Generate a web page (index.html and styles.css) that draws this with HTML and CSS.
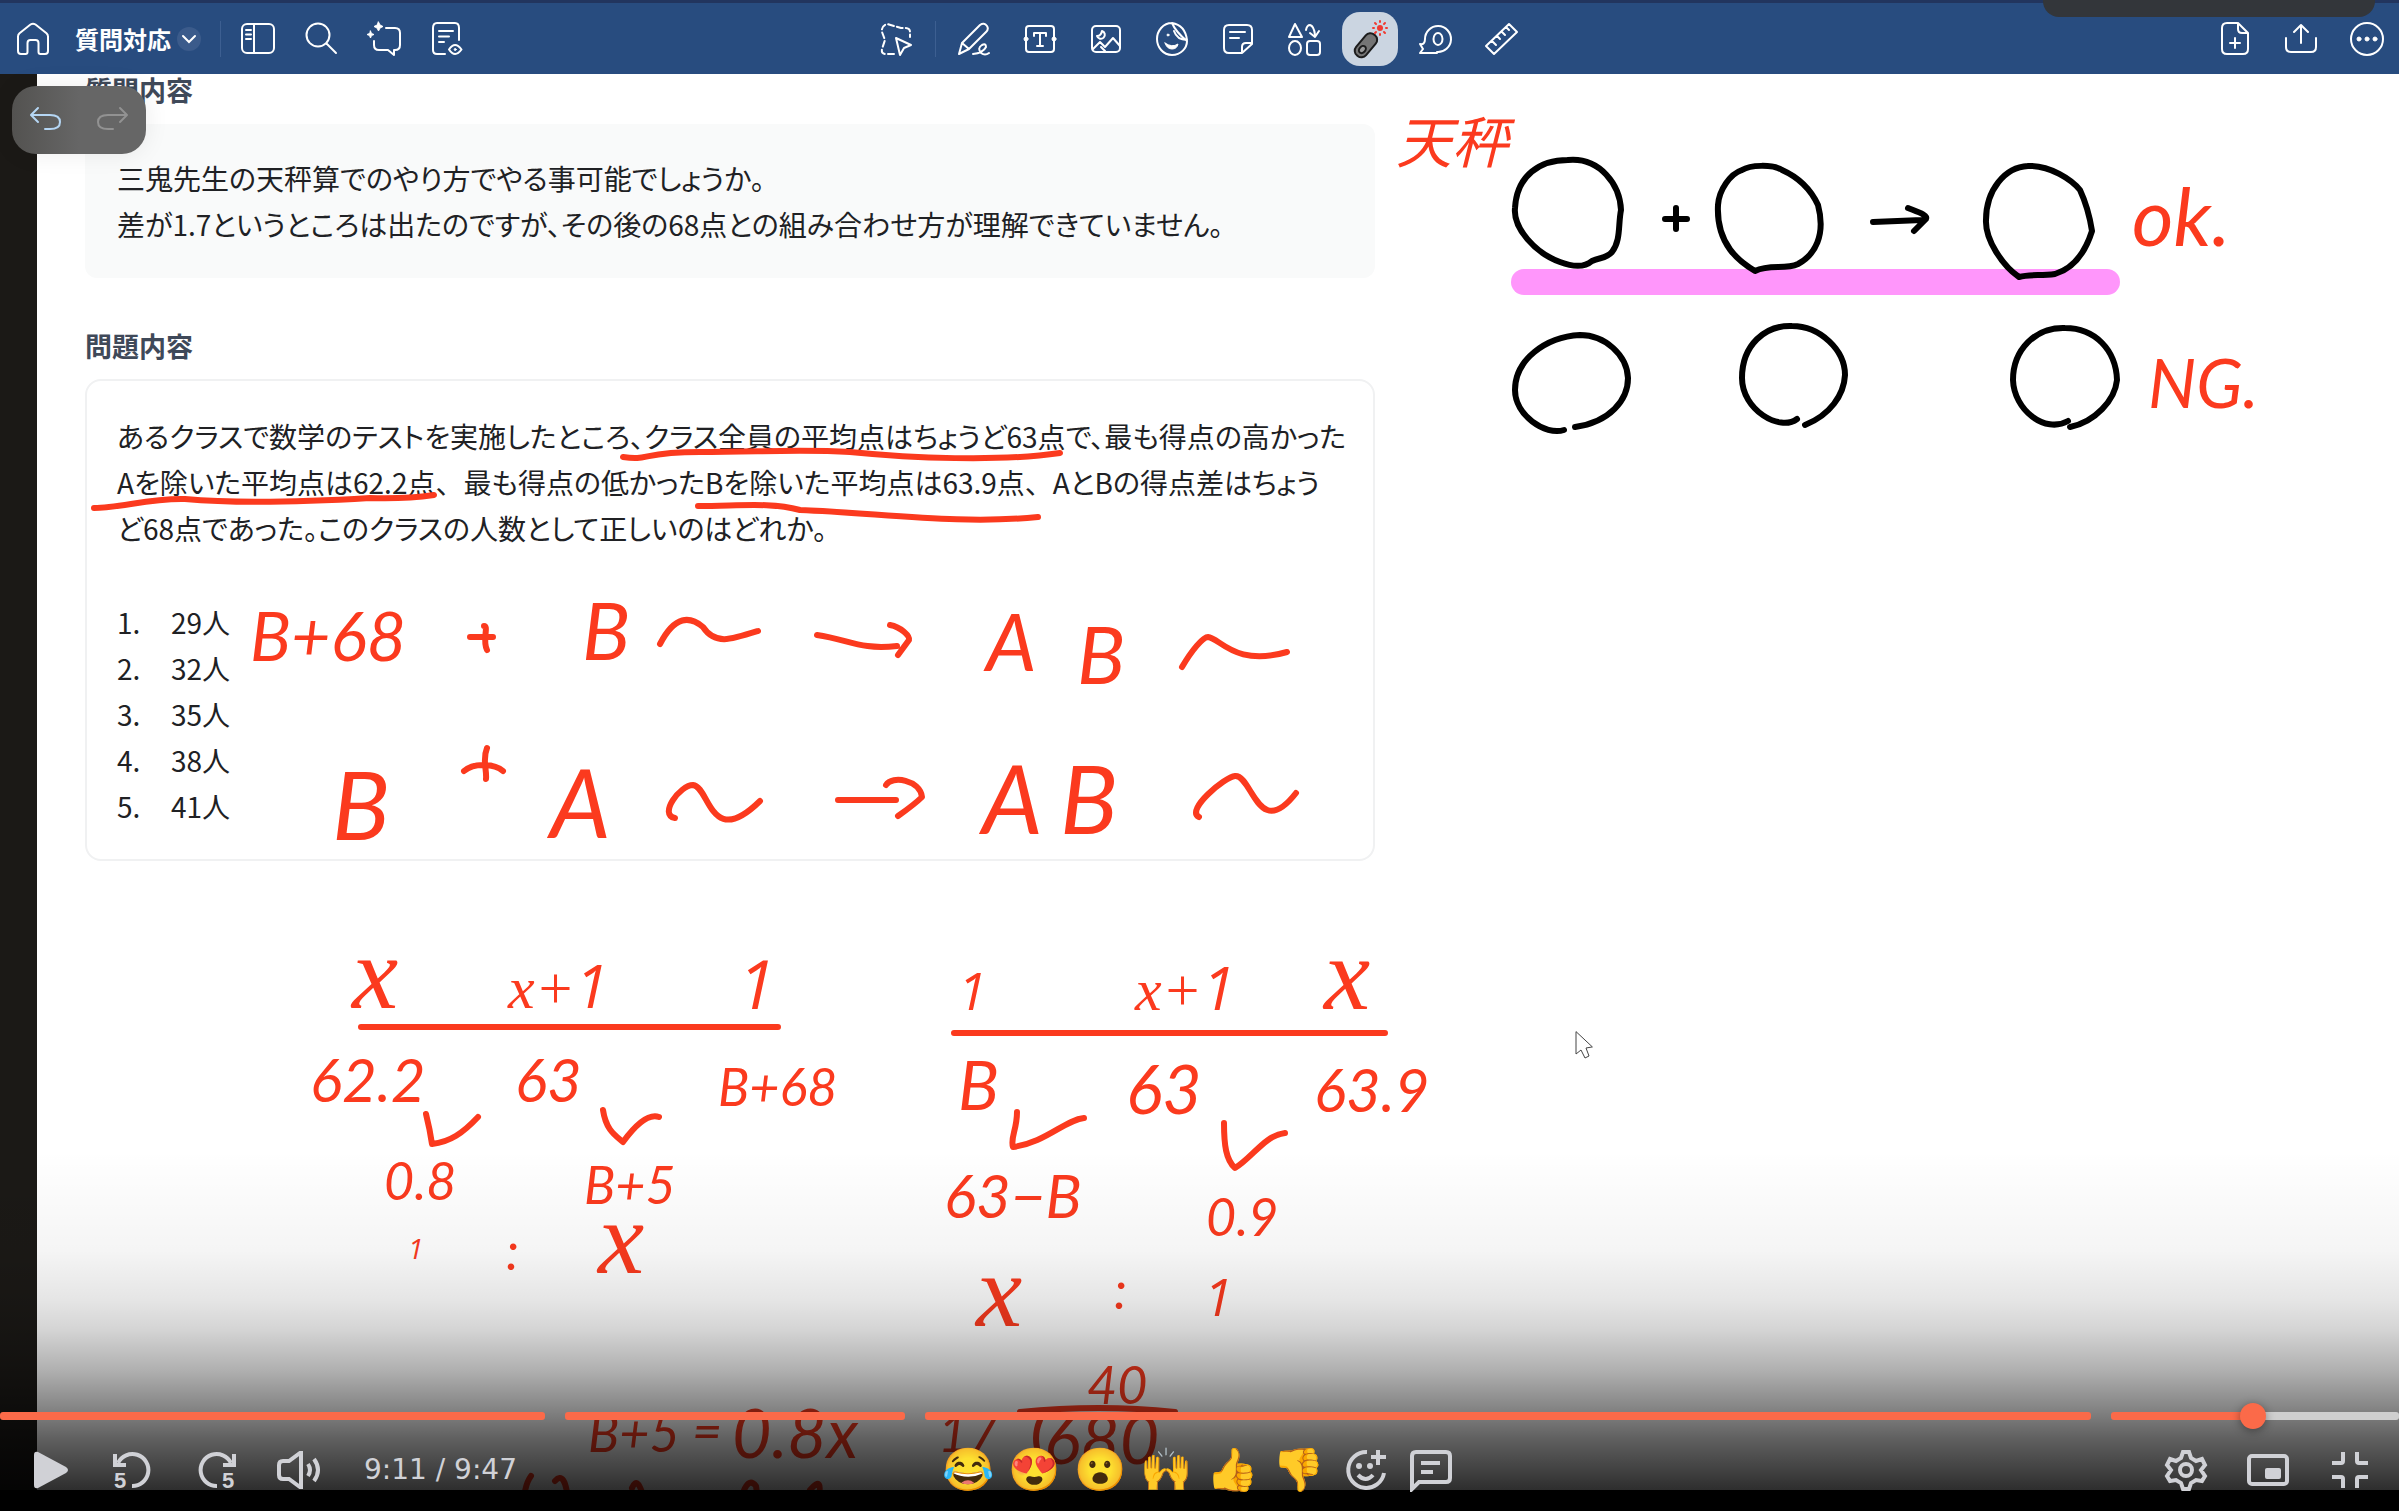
FILE: index.html
```html
<!DOCTYPE html>
<html lang="ja">
<head>
<meta charset="utf-8">
<meta name="viewport" content="width=device-width, initial-scale=1">
<title>質問対応</title>
<link rel="stylesheet" href="styles.css">
</head>
<body>
<div class="player">
  <div class="frame">
    <header class="toolbar">
      <div class="tools tools-left">
        <button class="tool" aria-label="ホーム"><svg class="icon" viewBox="0 0 36 36"><path d="M3 15.500Q3 13.500 4.500 12.200L15.500 3.500Q18 1.800 20.500 3.500L31.500 12.200Q33 13.500 33 15.500V30Q33 33 30 33H25.500Q23.500 33 23.500 31V22Q23.500 19 20.500 19H15.500Q12.500 19 12.500 22V31Q12.500 33 10.500 33H6Q3 33 3 30Z"/></svg></button>
        <button class="title">質問対応<span class="chevron"><svg class="icon-small" viewBox="0 0 24 24"><path d="M6 9l6 6 6-6"/></svg></span></button>
        <span class="divider"></span>
        <button class="tool" aria-label="サイドバー"><svg class="icon" viewBox="0 0 36 36"><rect x="2" y="3" width="32" height="29" rx="5"/><path d="M14 3v29M6 9h5M6 13.500h5M6 18h5"/></svg></button>
        <button class="tool" aria-label="検索"><svg class="icon" viewBox="0 0 36 36"><circle cx="15" cy="14" r="11.500"/><path d="M23.500 22.500L33 32"/></svg></button>
        <button class="tool" aria-label="AI アシスタント"><svg class="icon" viewBox="0 0 36 36"><path d="M20 7h9q5 0 5 5v12q0 5-5 5h-1v5l-6-5h-9q-5 0-5-5v-4"/><path class="solid" d="M12.500 1l1.500 3 3 1.500-3 1.500-1.500 3-1.500-3-3-1.500 3-1.500zM4.500 10l1 2.500L8 13.500l-2.500 1-1 2.500-1-2.500-2.500-1 2.500-1z"/></svg></button>
        <button class="tool" aria-label="ページ表示"><svg class="icon" viewBox="0 0 36 36"><path d="M30 19V7q0-5-4-5H8Q4 2 4 7v22q0 4 4 4h8M10 10h14M10 15.500h10M10 21h5"/><path d="M20 28.500q6-9 12.500 0q-6.500 9-12.500 0z"/><circle class="solid" cx="26.200" cy="28.500" r="1"/></svg></button>
      </div>
      <div class="tools tools-centre">
        <button class="tool" aria-label="選択"><svg class="icon" viewBox="0 0 36 36"><path stroke-dasharray="6 3" d="M15 33H7q-5 0-4-5l3-9-3-8Q2 5 8 3l14 4h4q5 0 5 4v5"/><path d="M17 17l15 7-7 3-4 7z"/></svg></button>
        <span class="divider divider-centre"></span>
        <button class="tool" aria-label="ペン"><svg class="icon" viewBox="0 0 36 36"><path d="M3 33l3-11L24 4q4-3 7 1 2 3-1 6L13 28zM6 22l7 6M17 33q10-1 13-7 0-4-4-2-5 3-1 8 4 3 8 0"/></svg></button>
        <button class="tool" aria-label="テキスト"><svg class="icon" viewBox="0 0 36 36"><rect x="4" y="5" width="28" height="26" rx="3"/><path d="M12 15v-3h12v3M18 12v13M15 25h6"/><circle class="solid" cx="4" cy="18" r="2"/><circle class="solid" cx="32" cy="18" r="2"/></svg></button>
        <button class="tool" aria-label="画像"><svg class="icon" viewBox="0 0 36 36"><rect x="4" y="5" width="28" height="26" rx="4"/><path d="M5 28l7-7 5 5 8-9 7 8M17 30l-4-4M14 10a4 4 0 1 1-5 5q4 0 5-5"/></svg></button>
        <button class="tool" aria-label="ステッカー"><svg class="icon" viewBox="0 0 36 36"><path d="M18 2C9 2 3 10 3 18s6 16 15 16 15-7 15-14C28 16 21 9 18 2q13 2 15 17-10 0-13-9"/><path class="solid" d="M11 22q7 5 13 1-1 5-6 5-5 0-7-6z"/><circle class="solid" cx="14" cy="14" r="1"/></svg></button>
        <button class="tool" aria-label="付箋"><svg class="icon" viewBox="0 0 36 36"><path d="M22 32H9q-5 0-5-5V9q0-5 5-5h18q5 0 5 5v14zM22 32v-6q0-4 4-4h6M10 11h15M10 17h9"/></svg></button>
        <button class="tool" aria-label="図形"><svg class="icon" viewBox="0 0 36 36"><path d="M9 3l7 13H3zM20 9q1-5 4-5 4 1 5 10M24 12l5 4 4-6"/><ellipse cx="9" cy="27" rx="6" ry="7"/><rect x="21" y="20" width="13" height="14" rx="3"/></svg></button>
        <button class="tool tool-active" aria-label="レーザーポインター" aria-pressed="true"><svg class="icon icon-large" viewBox="0 0 48 48"><g transform="rotate(40 20 31)"><rect x="13" y="17" width="13" height="27" rx="6" fill="#757575" stroke="#1c1c1c" stroke-width="2"/><ellipse cx="19.500" cy="36" rx="3" ry="4" fill="#999" stroke="#1c1c1c" stroke-width="2"/></g><circle cx="34" cy="13" r="3" fill="#f03a30" stroke="none"/><path stroke="#f03a30" d="M34 6v1M34 19v1M27 13h1M40 13h1M29 8l1 1M38 17l1 1M29 18l1-1M38 9l1-1"/></svg></button>
        <button class="tool" aria-label="テープ"><svg class="icon" viewBox="0 0 36 36"><path d="M19 31A13 13 0 1 0 7 18q0 6-5 5l3 5-3 4h17"/><ellipse cx="20" cy="18" rx="4.500" ry="6"/></svg></button>
        <button class="tool" aria-label="定規"><svg class="icon" viewBox="0 0 36 36"><path d="M2 25L25 3l8 8-23 22zM8 20l4 4M13 15l3 3M18 11l3 3M22 6l3 3"/></svg></button>
      </div>
      <div class="tools tools-right">
        <button class="tool" aria-label="ページを追加"><svg class="icon" viewBox="0 0 36 36"><path d="M20 2H10Q5 2 5 7v21q0 5 5 5h16q5 0 5-5V12L21 2v6q0 4 4 4h6M18 17v10M13 22h10"/></svg></button>
        <button class="tool" aria-label="共有"><svg class="icon" viewBox="0 0 36 36"><path d="M3 17v9q0 5 5 5h20q5 0 5-5v-9M18 22V4M11 11l7-7 7 7"/></svg></button>
        <button class="tool" aria-label="その他"><svg class="icon" viewBox="0 0 36 36"><circle cx="18" cy="18" r="16"/><g class="solid"><circle cx="10" cy="18" r="2"/><circle cx="18" cy="18" r="2"/><circle cx="26" cy="18" r="2"/></g></svg></button>
      </div>
      <span class="notch"></span>
    </header>

    <main class="board">
      <article class="document">
        <h2 class="label">質問内容</h2>
        <p class="question">三鬼先生の天秤算でのやり方でやる事可能でしょうか。<br>差が1.7というところは出たのですが、その後の68点との組み合わせ方が理解できていません。</p>
        <h2 class="label">問題内容</h2>
        <section class="problem">
          <p>あるクラスで数学のテストを実施したところ、クラス全員の平均点はちょうど63点で、最も得点の高かった<br>Aを除いた平均点は62.2点<span class="full">、</span>最も得点の低かったBを除いた平均点は63.9点<span class="full">、</span>AとBの得点差はちょう<br>ど68点であった。このクラスの人数として正しいのはどれか。</p>
          <ol class="choices"><li>29人</li><li>32人</li><li>35人</li><li>38人</li><li>41人</li></ol>
        </section>
      </article>
    </main>

    <svg class="ink" role="group" aria-label="手書きメモ">
      <path class="marker" d="M1524 282H2107"/>
      <g class="pen-black">
        <path d="M1568 160C1600 157 1620 185 1621 210C1618 225 1621 240 1612 252C1606 259 1600 257 1592 261C1585 267 1573 267 1560 262C1535 253 1513 228 1515 208C1517 175 1540 160 1568 160"/>
        <path d="M1742 170C1750 165 1772 164 1782 170C1800 178 1812 192 1818 205C1826 235 1815 255 1798 264C1785 270 1770 264 1755 271C1740 262 1716 245 1718 205C1719 190 1730 174 1742 170"/>
        <path d="M2028 166C2050 165 2072 180 2080 190C2087 205 2090 218 2092 231C2086 250 2075 268 2055 274C2040 276 2030 274 2019 277C2003 266 1985 240 1986 220C1986 190 2005 167 2028 166"/>
        <path d="M1564 430C1545 436 1515 415 1515 390C1515 360 1545 337 1580 335C1605 335 1627 355 1628 378C1628 400 1610 422 1575 427"/>
        <path d="M1797 419C1780 432 1742 410 1742 378C1742 345 1765 325 1792 326C1820 326 1845 350 1845 375C1844 395 1830 415 1805 425"/>
        <path d="M2068 421C2045 434 2014 410 2013 380C2013 350 2035 327 2065 328C2095 328 2116 350 2117 380C2115 400 2095 422 2070 427"/>
        <path d="M1665 219H1687M1676 208V229"/>
        <path d="M1873 222L1922 220M1908 208C1918 212 1928 215 1926 219L1914 231"/>
      </g>
      <g class="pen-red">
        <path d="M623 457C650 461 640 452 700 452C760 452 800 449 850 452C910 458 1000 462 1060 453"/>
        <path d="M94 508C120 508 150 498 185 499C240 504 320 501 370 498C400 499 420 497 434 495"/>
        <path d="M698 506C740 506 770 502 800 510C880 513 960 525 1038 517"/>
        <path d="M470 637H493M484 626C489 626 482 640 487 650"/>
        <path d="M660 644C675 615 690 616 703 627C715 645 730 640 758 631"/>
        <path d="M817 635C850 640 860 650 897 646M890 625C901 627 910 636 909 640L898 655"/>
        <path d="M1182 667C1192 650 1203 637 1208 637C1220 638 1235 667 1287 652"/>
        <path d="M464 771C475 762 495 764 503 771M487 748C482 760 487 770 486 779"/>
        <path d="M675 818C658 815 680 785 693 785C710 787 710 850 760 801"/>
        <path d="M838 800H896M886 785C892 775 920 780 922 797Q915 804 898 816"/>
        <path d="M1199 817C1185 810 1225 777 1235 776C1252 774 1258 842 1296 793"/>
        <path d="M361 1027H778M954 1033H1385"/>
        <path d="M426 1114Q430 1130 432 1144C450 1142 463 1133 478 1117"/>
        <path d="M603 1110C606 1130 615 1135 623 1142Q645 1112 659 1117"/>
        <path d="M1017 1112C1017 1130 1010 1138 1013 1147C1045 1143 1065 1120 1084 1118"/>
        <path d="M1224 1123C1224 1145 1226 1160 1235 1168C1252 1158 1265 1135 1285 1133"/>
        <path d="M1020 1412Q1100 1404 1175 1412M1040 1420Q1032 1438 1040 1458"/>
        <path d="M531 1476Q525 1484 524 1500M555 1481Q565 1470 568 1500M632 1488Q638 1474 644 1500M742 1496Q748 1476 756 1486L758 1500M810 1490Q824 1474 818 1500"/>
      </g>
      <g class="writing">
        <text class="kanji" x="1396" y="163">天秤</text>
        <text class="big" x="2132" y="246">ok.</text>
        <text class="large" x="2148" y="408">NG.</text>
        <text class="large" x="250" y="661">B+68</text>
        <text class="big" x="582" y="660">B</text>
        <text class="big" x="986" y="671">A</text>
        <text class="big" x="1077" y="684">B</text>
        <text class="huge" x="332" y="840">B</text>
        <text class="huge" x="550" y="838">A</text>
        <text class="huge" x="982" y="834">A</text>
        <text class="huge" x="1060" y="834">B</text>
        <text class="letter-big" x="352" y="1008">x</text>
        <text class="letter" x="508" y="1008">x+<tspan class="one">1</tspan></text>
        <text class="large one" x="738" y="1009">1</text>
        <text class="mid" x="310" y="1102">62.2</text>
        <text class="mid" x="515" y="1102">63</text>
        <text class="small" x="718" y="1106">B+68</text>
        <text class="small" x="384" y="1200">0.8</text>
        <text class="small" x="584" y="1204">B+5</text>
        <text class="tiny one" x="408" y="1259">1</text>
        <text class="small" x="506" y="1270">:</text>
        <text class="letter-big" x="598" y="1273">x</text>
        <text class="small one" x="958" y="1010">1</text>
        <text class="letter" x="1135" y="1010">x+<tspan class="one">1</tspan></text>
        <text class="letter-big" x="1324" y="1009">x</text>
        <text class="large" x="958" y="1110">B</text>
        <text class="large" x="1126" y="1114">63</text>
        <text class="mid" x="1314" y="1112">63.9</text>
        <text class="mid" x="944" y="1218">63−B</text>
        <text class="small" x="1206" y="1236">0.9</text>
        <text class="letter-big" x="976" y="1326">x</text>
        <text class="small" x="1114" y="1309">:</text>
        <text class="small one" x="1204" y="1316">1</text>
        <text class="small" x="1087" y="1404">40</text>
        <text class="small" x="588" y="1452">B+5</text>
        <text class="small" x="692" y="1450">=</text>
        <text class="large" x="732" y="1458">0.8x</text>
        <text class="small" x="938" y="1452">17</text>
        <text class="large" x="1044" y="1464">680</text>
      </g>
      <path class="cursor" d="M1576 1032v22l5-4 4 8 4-2-3-8 6-1z"/>
    </svg>

    <div class="history">
      <button class="step" aria-label="元に戻す"><svg class="icon" viewBox="0 0 36 36"><path d="M10 6l-7 7 7 7M4 13h18q10 0 10 7t-10 7h-5"/></svg></button>
      <button class="step step-off" aria-label="やり直す" disabled><svg class="icon" viewBox="0 0 36 36"><path d="M26 6l7 7-7 7M32 13H14q-10 0-10 7t10 7h5"/></svg></button>
    </div>
  </div>

  <footer class="controls">
    <div class="timeline">
      <span class="chapter played"></span><span class="chapter played chapter-two"></span><span class="chapter played chapter-three"></span><span class="chapter current"></span>
      <input class="seek" type="range" min="0" max="1000" value="944" aria-label="再生位置">
    </div>
    <div class="row">
      <div class="group">
        <button class="control" aria-label="再生"><svg class="glyph" viewBox="0 0 44 44"><path class="fill" d="M6 7q0-4 4-3l28 15q4 3 0 6L10 40q-4 1-4-3z"/></svg></button>
        <button class="control" aria-label="5秒戻る"><svg class="glyph" viewBox="0 0 44 44"><path d="M21 38A16 16 0 1 0 7 15M4 6v11h11"/><text class="skip" x="3" y="40">5</text></svg></button>
        <button class="control" aria-label="5秒進む"><svg class="glyph" viewBox="0 0 44 44"><path d="M23 38A16 16 0 1 1 37 15M40 6v11H29"/><text class="skip" x="28" y="40">5</text></svg></button>
        <button class="control" aria-label="音量"><svg class="glyph" viewBox="0 0 44 44"><path d="M24 5v34h-1L12 31H6q-4 0-4-4V17q0-4 4-4h6L23 5zM31 16q4 6 0 12M37 11q8 11 0 22"/></svg></button>
        <time class="time">9:11 / 9:47</time>
      </div>
      <div class="reactions">
        <button class="emoji">😂</button><button class="emoji">😍</button><button class="emoji">😮</button><button class="emoji">🙌</button><button class="emoji">👍</button><button class="emoji">👎</button>
        <button class="emoji" aria-label="リアクションを追加"><svg class="glyph" viewBox="0 0 44 44"><path d="M24 4A18 18 0 1 0 41 25M35 2v15M28 9h15M15 27q8 8 15 0"/><circle class="fill" cx="16" cy="18" r="3"/><circle class="fill" cx="27" cy="18" r="3"/></svg></button>
        <button class="emoji" aria-label="コメント"><svg class="glyph" viewBox="0 0 44 44"><path d="M3 41V8q0-4 4-4h30q4 0 4 4v22q0 4-4 4H10zM12 15h19M12 24h12"/></svg></button>
      </div>
      <div class="group group-end">
        <button class="control" aria-label="設定"><svg class="glyph" viewBox="0 0 44 44"><path d="M19 4h6l2 6 5 3 6-2 3 6-4 5 4 6-3 5-6-1-5 3-2 6h-6l-2-6-5-3-6 1-3-5 4-6-4-5 3-6 6 2 5-3z"/><circle cx="22" cy="22" r="6"/></svg></button>
        <button class="control" aria-label="ピクチャーインピクチャー"><svg class="glyph" viewBox="0 0 44 44"><rect x="3" y="8" width="38" height="28" rx="3"/><rect class="fill" x="19" y="20" width="16" height="11" rx="2"/></svg></button>
        <button class="control" aria-label="全画面を終了"><svg class="glyph" viewBox="0 0 44 44"><path d="M4 15h9q2 0 2-2V4M40 15h-9q-2 0-2-2V4M4 29h9q2 0 2 2v9M40 29h-9q-2 0-2 2v9"/></svg></button>
      </div>
    </div>
  </footer>
</div>
</body>
</html>
```
FILE: styles.css
```css
* { box-sizing: border-box; }
body { margin: 0; background: #000; font-family: "Noto Sans CJK JP", sans-serif; color: #202124; }
button { border: 0; padding: 0; background: none; color: inherit; font: inherit; }
h2, p, ol { margin: 0; padding: 0; }

.player { position: relative; display: flex; flex-direction: column; min-height: 100vh; padding-bottom: 21px; overflow: hidden; }
.frame { position: relative; flex: 1; display: flex; flex-direction: column; overflow: hidden; background: #fff; }

/* app toolbar */
.toolbar { position: relative; z-index: 2; display: grid; grid-template-columns: 1fr auto 1fr; align-items: center; height: 74px; border-top: 3px solid #22355e; background: #284c7f; color: #fff; }
.tools { display: flex; align-items: center; gap: 30px; }
.tools-left { padding-left: 15px; gap: 27px; }
.tools-right { justify-content: flex-end; padding-right: 14px; }
.tool { display: flex; align-items: center; justify-content: center; width: 36px; height: 54px; }
.tool-active { width: 56px; margin: 0 -10px; border-radius: 18px; background: #cbd5e1; }
.icon { width: 36px; height: 36px; fill: none; stroke: currentColor; stroke-width: 2; stroke-linecap: round; stroke-linejoin: round; }
.icon-large { width: 48px; height: 48px; }
.icon-small { width: 24px; height: 24px; fill: none; stroke: currentColor; stroke-width: 2; stroke-linecap: round; }
.solid { fill: currentColor; stroke-width: 1; }
.title { display: flex; align-items: center; gap: 6px; margin-left: -3px; font-size: 24px; font-weight: 700; }
.chevron { display: flex; border-radius: 50%; background: #3b5b8b; }
.divider { width: 1px; height: 36px; margin: 0 -8px; background: #3d5f91; }
.divider-centre { margin: 0 -10px; }
.notch { position: absolute; top: -3px; right: 24px; width: 332px; height: 17px; border-radius: 0 0 16px 16px; background: #33363a; }

/* shared page */
.board { flex: 1; display: grid; grid-template-columns: minmax(0, 59fr) minmax(0, 41fr); border-left: 37px solid #1b1916; }
.document { padding: 0 56px 0 48px; white-space: nowrap; font-size: 28px; line-height: 46px; font-feature-settings: "palt"; }
.label { font-size: 27px; line-height: 32px; font-weight: 700; color: #3f4959; font-feature-settings: normal; }
.question { margin: 18px 0 52px; padding: 31px 32px; border-radius: 12px; background: #f9fafa; }
.problem { margin-top: 17px; padding: 32px 30px 30px; border: 2px solid #f0f1f2; border-radius: 16px; }
.full { font-feature-settings: normal; }
.choices { margin-top: 48px; list-style: none; counter-reset: choice; }
.choices li { display: flex; counter-increment: choice; }
.choices li::before { content: counter(choice) "."; width: 54px; }

/* handwriting over the page */
.ink { position: absolute; inset: 0; width: 100%; height: 100%; overflow: hidden; fill: none; stroke-linecap: round; stroke-linejoin: round; }
.marker { stroke: #ff96fb; stroke-width: 26; }
.pen-black { stroke: #000; stroke-width: 6; }
.pen-red { stroke: #fb3a1e; stroke-width: 6; }
.writing { fill: #fb3a1e; font-family: Lato, sans-serif; font-style: italic; font-weight: 400; }
.kanji { font-family: "Noto Sans CJK JP", sans-serif; font-size: 56px; }
.huge { font-size: 96px; }
.big { font-size: 80px; }
.large { font-size: 68px; }
.mid { font-size: 60px; }
.small { font-size: 52px; }
.tiny { font-size: 28px; }
.one { font-family: "Open Sans", sans-serif; }
.letter { font-family: "Liberation Serif", serif; font-size: 60px; }
.letter-big { font-family: "Liberation Serif", serif; font-size: 104px; }
.cursor { fill: #fff; stroke: #444; stroke-width: 1; }

/* undo and redo */
.history { position: absolute; z-index: 3; left: 12px; top: 86px; display: flex; align-items: center; gap: 30px; height: 68px; padding: 0 16px; border-radius: 24px; background: linear-gradient(90deg, #535250, #666 50%); box-shadow: 0 0 24px #00000014; color: #b5d6f4; }
.step { display: flex; }
.step-off { color: #929292; }

/* video controls */
.controls { position: absolute; z-index: 4; left: 0; right: 0; bottom: 0; height: 361px; display: flex; flex-direction: column; justify-content: flex-end; color: #d0d1d6; background: linear-gradient(#0000 0, #0000000a 100px, #0000001a 150px, #0000002b 180px, #0000004f 220px, #00000080 263px, #000000a1 290px, #000000d1 340px, #000000e6 100%); }
.timeline { position: relative; display: flex; gap: 20px; height: 8px; }
.chapter { flex: 545; border-radius: 3px; background: #cfcfcf; }
.chapter-two { flex: 341; }
.chapter-three { flex: 1167; }
.current { flex: 288; background: linear-gradient(90deg, #fb6a49 50%, #cfcfcf 50%); }
.played { background: #fb6a49; }
.seek { position: absolute; left: 0; top: -9px; width: 100%; height: 26px; margin: 0; appearance: none; background: none; }
.seek::-webkit-slider-thumb { appearance: none; width: 26px; height: 26px; border-radius: 50%; background: #fb6a49; box-shadow: 0 2px 10px #0006; }
.row { display: grid; grid-template-columns: 1fr auto 1fr; align-items: center; height: 91px; padding: 8px 27px 0 28px; }
.group { display: flex; align-items: center; gap: 39px; }
.group-end { justify-content: flex-end; gap: 38px; }
.control, .emoji { display: flex; align-items: center; justify-content: center; width: 44px; height: 50px; }
.glyph { width: 44px; height: 44px; fill: none; stroke: currentColor; stroke-width: 4; }
.fill { fill: currentColor; stroke: none; }
.skip { fill: currentColor; stroke: none; font: 700 22px "Liberation Sans", sans-serif; }
.time { margin-left: 4px; font: 28px "DejaVu Sans", sans-serif; }
.reactions { display: flex; gap: 16px; }
.emoji { width: 50px; font: 42px "Noto Color Emoji", sans-serif; }
```
